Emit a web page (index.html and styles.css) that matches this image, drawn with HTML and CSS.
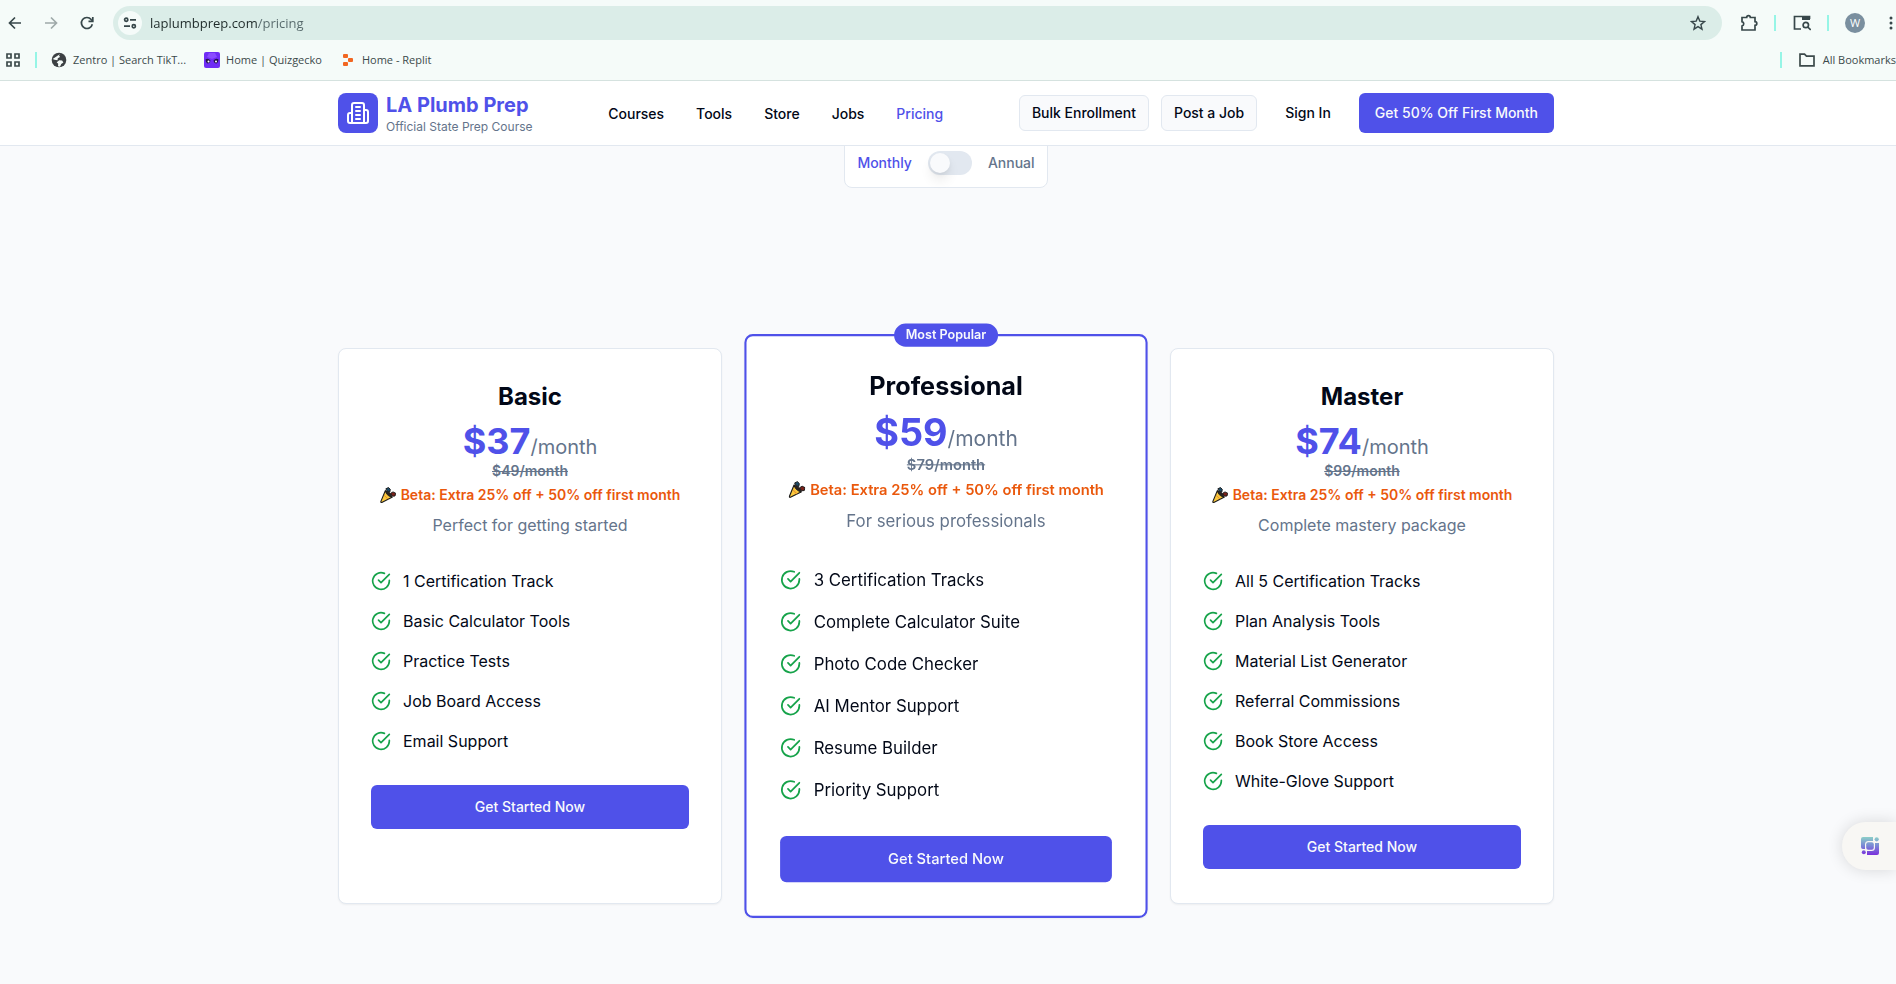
FILE: index.html
```html
<!DOCTYPE html>
<html lang="en">
<head>
<meta charset="utf-8">
<title>LA Plumb Prep – Pricing</title>
<link rel="stylesheet" href="styles.css">
</head>
<body>
<svg class="sprite" aria-hidden="true">
  <symbol id="check" viewBox="0 0 24 24"><path d="M22 11.08V12a10 10 0 1 1-5.93-9.14"/><path d="m9 11 3 3L22 4"/></symbol>
  <symbol id="popper" viewBox="0 0 16 16">
    <path d="M5.300 3.800 12 10.300 1.800 15.400Q.6 15.700.9 14.400Z" fill="#fbc93d" stroke="#1b1b1b" stroke-width="1.100" stroke-linejoin="round"/>
    <path d="M4.200 8.300 8.200 12.300" stroke="#e8932f" stroke-width="1"/>
    <path d="M5.500 3.600Q8.500 4.500 10.400 6.600 12 8.400 12.100 10.400 9 9.600 7.200 7.600 5.500 5.800 5.500 3.600Z" fill="#2b2320" stroke="#1b1b1b" stroke-width=".8"/>
    <path d="M5.800 1.800 8.500.5 10.300 2.300 9.800 5.200 7.500 4.300Z" fill="#1d4a66" stroke="#161616" stroke-width=".9"/>
    <path d="M10.600 6.300 13 4.900 15.700 6.200 15 9 12.500 9.200Z" fill="#7a2119" stroke="#161616" stroke-width=".9"/>
  </symbol>
</svg>

<div class="browser">
  <div class="toolbar">
    <button class="tool" aria-label="Back"><svg viewBox="0 0 16 16" class="line"><path d="M14 8H3M8 2.500 2.500 8 8 13.500"/></svg></button>
    <button class="tool faded" aria-label="Forward"><svg viewBox="0 0 16 16" class="line"><path d="M2 8h11M8 2.500 13.500 8 8 13.500"/></svg></button>
    <button class="tool reload" aria-label="Reload"><svg viewBox="0 0 16 16" class="line"><path d="M13.300 9.200A5.500 5.500 0 1 1 12.200 4.500L13.600 6"/><path d="M13.800 2v4.300H9.500"/></svg></button>
    <div class="address">
      <button class="site-info" aria-label="Site information"><svg viewBox="0 0 14 14" class="line"><circle cx="3.200" cy="3.800" r="1.600"/><path d="M7 3.800h6M1 10.200h6"/><circle cx="10.800" cy="10.200" r="1.600"/></svg></button>
      <input class="url" type="text" aria-label="Address" value="laplumbprep.com/pricing">
      <button class="star" aria-label="Bookmark this page"><svg viewBox="0 0 16 16" class="line thin"><path d="m8 1.700 1.800 4.400 4.700.4-3.600 3.100 1.100 4.600L8 11.700l-4 2.500 1.100-4.600L1.500 6.500l4.700-.4Z"/></svg></button>
    </div>
    <button class="tool ext" aria-label="Extensions"><svg viewBox="0 0 18 18" class="line"><path d="M2 3.500h4.700a1.800 1.800 0 0 1 3.600 0H15v4.200a1.800 1.800 0 0 1 0 3.600V16H2v-4a2.200 2.200 0 0 0 0-4.300Z"/></svg></button>
    <span class="bar"></span>
    <button class="tool lens" aria-label="Search side panel"><svg viewBox="0 0 18 18" class="line"><path d="M8 15H1.500V2.500H16.500V5"/><path d="M9 2h8v4H9z" fill="currentColor" stroke="none"/><circle cx="12.800" cy="11" r="2.700"/><path d="m14.700 13 3 3"/></svg></button>
    <span class="bar"></span>
    <button class="avatar" aria-label="Profile">W</button>
    <button class="more" aria-label="Menu"><svg viewBox="0 0 4 16"><circle cx="2" cy="3" r="1.500"/><circle cx="2" cy="8" r="1.500"/><circle cx="2" cy="13" r="1.500"/></svg></button>
  </div>
  <nav class="bookmarks" aria-label="Bookmarks">
    <button class="apps" aria-label="Apps"><svg viewBox="0 0 14 14" class="line"><path d="M1 1h4v4H1zM9 1h4v4H9zM1 9h4v4H1zM9 9h4v4H9z"/></svg></button>
    <span class="bar"></span>
    <a href="#"><svg viewBox="0 0 16 16"><circle cx="8" cy="8" r="7.300" fill="#3c4043"/><path d="M9.500 1.800 8 3.200 9 5 6.800 6.200 6.500 8.200 3.500 7.700 1.700 7M8.300 8.200l2.800.3 1.300 2-2.200 1.600-1.200 2.600-2-.5.200-2.500-1.500-1.500z" fill="#f5fbf9"/></svg>Zentro | Search TikT...</a>
    <a href="#"><svg viewBox="0 0 16 16"><rect width="16" height="16" rx="2" fill="#6f2cf5"/><path d="M5 1h6l2 4-5 2-5-2z" fill="#8a4cff"/><path d="M1.500 7.500Q4 5.500 6.500 8.500 6 11.500 3.500 11.500 1.500 10.500 1.500 7.500ZM14.500 7.500Q12 5.500 9.500 8.500 10 11.500 12.500 11.500 14.500 10.500 14.500 7.500Z" fill="#24104f"/><circle cx="4.500" cy="9.500" r="1" fill="#fff"/><circle cx="12" cy="9.500" r="1" fill="#fff"/></svg>Home | Quizgecko</a>
    <a href="#"><svg viewBox="0 0 16 16" fill="#f26722"><rect x="3" y="2" width="5" height="4" rx="1"/><rect x="8" y="6" width="5" height="4" rx="1"/><rect x="3" y="10" width="5" height="4" rx="1"/></svg>Home - Replit</a>
    <span class="spring"></span>
    <span class="bar"></span>
    <button class="all"><svg viewBox="0 0 18 16" class="line"><path d="M2 2.200h4.500l2 2H16v9.600H2z"/></svg>All Bookmarks</button>
  </nav>
</div>

<header class="site-header">
  <div class="container header-row">
    <a class="brand" href="#">
      <span class="logo"><svg viewBox="0 0 24 24"><path d="M6 22V4a2 2 0 0 1 2-2h8a2 2 0 0 1 2 2v18Z"/><path d="M6 12H4a2 2 0 0 0-2 2v6a2 2 0 0 0 2 2h2M18 9h2a2 2 0 0 1 2 2v9a2 2 0 0 1-2 2h-2M10 6h4M10 10h4M10 14h4M10 18h4"/></svg></span>
      <span class="brand-text"><span class="brand-name">LA Plumb Prep</span><span class="brand-sub">Official State Prep Course</span></span>
    </a>
    <nav class="main-nav" aria-label="Main">
      <a href="#">Courses</a><a href="#">Tools</a><a href="#">Store</a><a href="#">Jobs</a><a class="active" href="#">Pricing</a>
    </nav>
    <div class="actions">
      <button class="btn outline">Bulk Enrollment</button>
      <button class="btn outline">Post a Job</button>
      <button class="btn ghost">Sign In</button>
      <button class="btn primary">Get 50% Off First Month</button>
    </div>
  </div>
</header>

<main class="pricing">
  <div class="billing">
    <label class="monthly" for="annual">Monthly</label>
    <input id="annual" class="switch" type="checkbox" role="switch" aria-label="Annual billing">
    <label for="annual">Annual</label>
  </div>
  <div class="container plans">
    <section class="plan">
      <h2>Basic</h2>
      <p class="price">$37<span>/month</span></p>
      <p class="was">$49/month</p>
      <p class="beta"><svg><use href="#popper"/></svg>Beta: Extra 25% off + 50% off first month</p>
      <p class="about">Perfect for getting started</p>
      <ul>
        <li><svg><use href="#check"/></svg>1 Certification Track</li>
        <li><svg><use href="#check"/></svg>Basic Calculator Tools</li>
        <li><svg><use href="#check"/></svg>Practice Tests</li>
        <li><svg><use href="#check"/></svg>Job Board Access</li>
        <li><svg><use href="#check"/></svg>Email Support</li>
      </ul>
      <button class="btn start">Get Started Now</button>
    </section>
    <section class="plan featured">
      <span class="badge">Most Popular</span>
      <h2>Professional</h2>
      <p class="price">$59<span>/month</span></p>
      <p class="was">$79/month</p>
      <p class="beta"><svg><use href="#popper"/></svg>Beta: Extra 25% off + 50% off first month</p>
      <p class="about">For serious professionals</p>
      <ul>
        <li><svg><use href="#check"/></svg>3 Certification Tracks</li>
        <li><svg><use href="#check"/></svg>Complete Calculator Suite</li>
        <li><svg><use href="#check"/></svg>Photo Code Checker</li>
        <li><svg><use href="#check"/></svg>AI Mentor Support</li>
        <li><svg><use href="#check"/></svg>Resume Builder</li>
        <li><svg><use href="#check"/></svg>Priority Support</li>
      </ul>
      <button class="btn start">Get Started Now</button>
    </section>
    <section class="plan">
      <h2>Master</h2>
      <p class="price">$74<span>/month</span></p>
      <p class="was">$99/month</p>
      <p class="beta"><svg><use href="#popper"/></svg>Beta: Extra 25% off + 50% off first month</p>
      <p class="about">Complete mastery package</p>
      <ul>
        <li><svg><use href="#check"/></svg>All 5 Certification Tracks</li>
        <li><svg><use href="#check"/></svg>Plan Analysis Tools</li>
        <li><svg><use href="#check"/></svg>Material List Generator</li>
        <li><svg><use href="#check"/></svg>Referral Commissions</li>
        <li><svg><use href="#check"/></svg>Book Store Access</li>
        <li><svg><use href="#check"/></svg>White-Glove Support</li>
      </ul>
      <button class="btn start">Get Started Now</button>
    </section>
  </div>
</main>

<button class="widget" aria-label="Open assistant">
  <svg viewBox="0 0 18 18"><defs><linearGradient id="wg" x1="0" y1="0" x2="0" y2="18" gradientUnits="userSpaceOnUse"><stop offset="0" stop-color="#8ccfc8"/><stop offset=".5" stop-color="#7a86d6"/><stop offset="1" stop-color="#7a2fdc"/></linearGradient></defs>
    <path d="M2 0h10v4H7.500a3.500 3.500 0 0 0-3.500 3.500V12H2a2 2 0 0 1-2-2V2a2 2 0 0 1 2-2Z" fill="url(#wg)"/>
    <path d="M14 6H18v10a2 2 0 0 1-2 2H6v-4h4.500a3.500 3.500 0 0 0 3.500-3.500Z" fill="url(#wg)"/>
    <rect x="5.200" y="5.200" width="7.600" height="7.600" rx="2" fill="url(#wg)"/>
    <circle cx="15.700" cy="2.300" r="2.100" fill="url(#wg)"/><circle cx="2.800" cy="15.200" r="2" fill="url(#wg)"/></svg>
</button>
</body>
</html>
```
FILE: styles.css
```css
*, *::before, *::after { box-sizing: border-box; }
body {
  margin: 0;
  min-height: 100vh;
  overflow-x: hidden;
  background: #f9fafc;
  color: #020817;
  font-family: Inter, "Liberation Sans", sans-serif;
  font-size: 16px;
  line-height: 24px;
}
h2, p, ul { margin: 0; padding: 0; }
ul { list-style: none; }
a { color: inherit; text-decoration: none; }
button, input { margin: 0; padding: 0; border: 0; background: none; color: inherit; font: inherit; }
button { cursor: pointer; }
svg { display: block; flex: none; }
.sprite { position: absolute; width: 0; height: 0; }
.line { fill: none; stroke: currentColor; stroke-width: 1.7; }
.thin { stroke-width: 1.4; }

/* Browser bars */
.browser {
  height: 81px;
  overflow: hidden;
  border-bottom: 1px solid #d5e2df;
  background: #f5fbf9;
  color: #37474a;
  font-family: "Open Sans", "Noto Sans", sans-serif;
}
.toolbar { display: flex; align-items: center; padding: 6px 0 0 7px; }
.tool { margin-right: 20px; }
.tool svg { width: 16px; height: 16px; }
.faded { opacity: 0.45; }
.reload { margin-right: 18px; }
.address {
  flex: 1;
  display: flex;
  align-items: center;
  height: 34px;
  padding: 0 16px 0 5px;
  border-radius: 17px;
  background: #dbede8;
}
.site-info {
  display: grid;
  place-items: center;
  width: 24px;
  height: 24px;
  border-radius: 50%;
  background: #f5fbf9;
}
.site-info svg { width: 14px; height: 14px; }
.url {
  flex: 1;
  margin-left: 8px;
  outline: 0;
  font-size: 13px;
  line-height: 20px;
  color: #1f2b2a;
  background: linear-gradient(90deg, #1f2b2a 107px, #55686a 107px);
  background-clip: text;
  -webkit-background-clip: text;
  -webkit-text-fill-color: transparent;
}
.star svg { width: 16px; height: 16px; }
.tool.ext { margin: 0 16px 0 18px; }
.tool.ext svg, .tool.lens svg { width: 18px; height: 18px; }
.tool.lens { margin: 0 16px 0 17px; }
.bar { width: 2px; height: 16px; background: #96f5e6; }
.avatar {
  width: 20px;
  height: 20px;
  margin: 0 24px 0 16px;
  border-radius: 50%;
  background: #7a8f9f;
  color: #fff;
  font-size: 11px;
  line-height: 20px;
}
.more { margin-right: 3px; }
.more svg { width: 4px; height: 16px; fill: currentColor; }
.bookmarks {
  display: flex;
  align-items: center;
  height: 40px;
  padding-left: 6px;
  font-size: 11px;
  color: #3c4a4b;
}
.apps { margin-right: 15px; }
.apps svg { width: 14px; height: 14px; }
.bookmarks a { display: flex; align-items: center; gap: 6px; margin-left: 14px; white-space: nowrap; }
.bookmarks a + a { margin-left: 18px; }
.bookmarks a svg { width: 16px; height: 16px; }
.spring { flex: 1; }
.all { display: flex; align-items: center; gap: 7px; margin-left: 16px; white-space: nowrap; }
.all svg { width: 18px; height: 16px; }

/* Site header */
.container {
  width: 100%;
  max-width: 1280px;
  margin: 0 auto;
  padding: 0 32px;
}
.site-header {
  position: relative;
  z-index: 2;
  padding-right: 4px;
  border-bottom: 1px solid #e2e8f0;
  background: #fff;
}
.header-row { display: flex; align-items: center; justify-content: space-between; height: 64px; }
.brand { display: flex; align-items: center; gap: 8px; }
.logo {
  display: grid;
  place-items: center;
  width: 40px;
  height: 40px;
  border-radius: 8px;
  background: #4f51e9;
}
.logo svg, .plan li svg { fill: none; stroke-width: 2; stroke-linecap: round; stroke-linejoin: round; }
.logo svg { width: 24px; height: 24px; stroke: #fff; }
.brand-text { display: flex; flex-direction: column; }
.brand-name { color: #4f51e9; font-size: 20px; font-weight: 700; line-height: 28px; }
.brand-sub { color: #64748b; font-size: 12px; line-height: 16px; }
.main-nav { display: flex; gap: 32px; padding-top: 2px; font-size: 14px; font-weight: 500; }
.active, .monthly { color: #4f51e9; }
.actions { display: flex; align-items: center; gap: 12px; }
.btn {
  height: 36px;
  border-radius: 6px;
  font-size: 14px;
  font-weight: 500;
  line-height: 20px;
  white-space: nowrap;
}
.outline { padding: 0 12px; border: 1px solid #e2e8f0; background: #f9fafc; }
.ghost { padding: 0 16px; }
.primary { height: 40px; padding: 0 16px; background: #4f51e9; color: #f8fafc; }

/* Pricing */
.pricing { padding: 0 4px 64px 0; }
.billing {
  display: flex;
  align-items: center;
  gap: 16px;
  width: fit-content;
  margin: -8px auto 160px;
  padding: 12px;
  border: 1px solid #e2e8f0;
  border-radius: 8px;
  background: #fff;
  color: #64748b;
  font-size: 14px;
  font-weight: 500;
}
.billing .monthly { color: #4f51e9; }
.switch {
  appearance: none;
  display: flex;
  align-items: center;
  width: 44px;
  height: 24px;
  padding: 2px;
  border-radius: 12px;
  background: #e2e8f0;
}
.switch::before {
  content: "";
  width: 20px;
  height: 20px;
  border-radius: 50%;
  background: #f9fafc;
  box-shadow: 0 8px 12px rgba(0, 0, 0, 0.07), 0 2px 4px rgba(0, 0, 0, 0.05);
}
.switch:checked { justify-content: flex-end; background: #4f51e9; }
.plans { display: grid; grid-template-columns: repeat(3, 1fr); gap: 32px; }
.plan {
  position: relative;
  padding: 32px;
  border: 1px solid #e2e8f0;
  border-radius: 8px;
  background: #fff;
  box-shadow: 0 1px 2px rgba(0, 0, 0, 0.05);
  text-align: center;
}
.featured { border: 2px solid #4f51e9; transform: scale(1.05); }
.badge {
  position: absolute;
  top: -12px;
  left: 50%;
  padding: 3px 11px;
  border-radius: 12px;
  background: #4f51e9;
  color: #f8fafc;
  font-size: 12px;
  font-weight: 600;
  line-height: 16px;
  white-space: nowrap;
  translate: -50% 0;
}
.plan h2 { margin-bottom: 8px; font-size: 24px; font-weight: 700; line-height: 32px; }
.price { color: #4f51e9; font-size: 36px; font-weight: 700; line-height: 40px; }
.price span { color: #64748b; font-size: 20px; font-weight: 400; line-height: 20px; }
.was { color: #64748b; font-size: 14px; font-weight: 600; line-height: 20px; text-decoration: line-through; }
.beta {
  display: flex;
  justify-content: center;
  align-items: center;
  gap: 5px;
  margin: 4px 0 8px;
  color: #ea580c;
  font-size: 14px;
  font-weight: 600;
  line-height: 20px;
}
.beta svg { width: 16px; height: 16px; }
.about { color: #64748b; }
.plan ul { display: grid; gap: 16px; margin: 32px 0; text-align: left; }
.plan li { display: flex; align-items: center; gap: 12px; }
.plan li svg { width: 20px; height: 20px; stroke: #16a34a; }
.start { width: 100%; height: 44px; background: #4f51e9; color: #f8fafc; }

.widget {
  position: fixed;
  right: 0;
  top: 822px;
  width: 54px;
  height: 48px;
  padding-left: 19px;
  border-radius: 24px 0 0 24px;
  background: #f8f7f4;
  box-shadow: 0 0 16px rgba(0, 0, 0, 0.14);
}
.widget svg { width: 18px; height: 18px; }
```
